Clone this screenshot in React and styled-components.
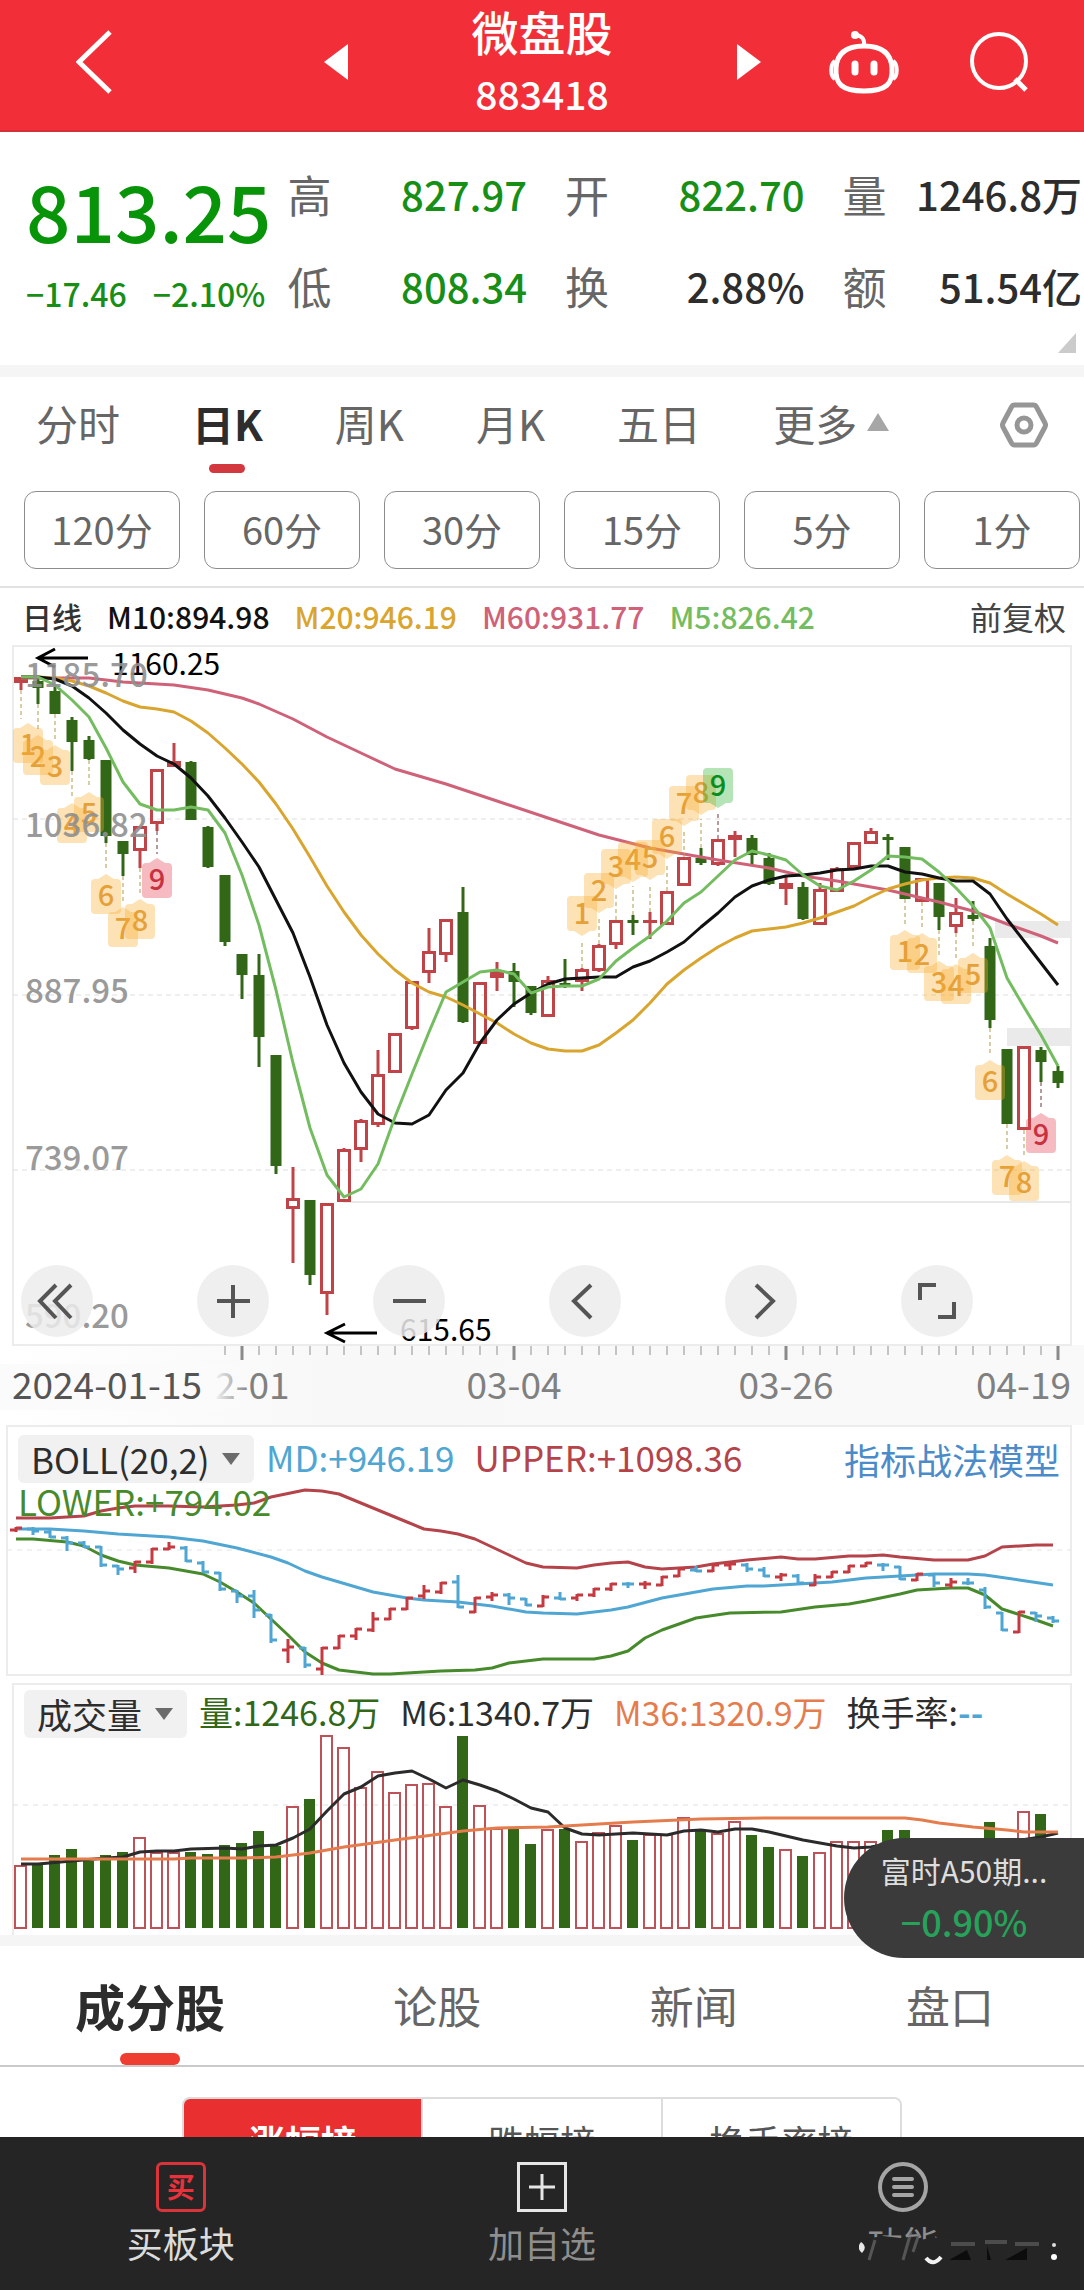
import { useState } from "react";
import styled, { createGlobalStyle } from "styled-components";

const FONT = `"Noto Sans CJK SC", "Noto Sans", sans-serif`;

const COLORS = {
  up: "#bf4347",
  down: "#316716",
  m5: "#73bd60",
  m10: "#111111",
  m20: "#d9a52e",
  m60: "#cf6178",
  boll: "#4fa6d3",
  bollUp: "#b5434a",
  bollLow: "#478a2c",
  volLong: "#e57c4d",
};

/* [up, body top, body bottom, high, low, volume top] */
const CANDLES = [
  [1, 677, 683, 677, 690, 1865],
  [0, 681, 688, 677, 704, 1863],
  [0, 691, 714, 687, 714, 1855],
  [0, 720, 742, 717, 771, 1849],
  [0, 740, 759, 736, 760, 1861],
  [0, 760, 836, 760, 843, 1855],
  [0, 841, 854, 841, 876, 1852],
  [1, 826, 851, 826, 868, 1837],
  [1, 769, 824, 769, 831, 1852],
  [1, 761, 767, 743, 767, 1852],
  [0, 762, 820, 761, 820, 1852],
  [0, 827, 867, 826, 868, 1854],
  [0, 875, 942, 875, 946, 1845],
  [0, 954, 975, 954, 999, 1843],
  [0, 975, 1037, 954, 1067, 1831],
  [0, 1055, 1166, 1055, 1174, 1846],
  [1, 1198, 1209, 1167, 1263, 1806],
  [0, 1200, 1275, 1200, 1285, 1799],
  [1, 1203, 1294, 1203, 1315, 1735],
  [1, 1149, 1202, 1148, 1202, 1747],
  [1, 1120, 1150, 1119, 1162, 1787],
  [1, 1074, 1125, 1050, 1127, 1771],
  [1, 1033, 1073, 1033, 1073, 1792],
  [1, 981, 1029, 981, 1030, 1784],
  [1, 951, 973, 928, 983, 1783],
  [1, 919, 955, 919, 962, 1806],
  [0, 912, 1022, 887, 1023, 1736],
  [1, 982, 1044, 982, 1044, 1805],
  [1, 971, 978, 962, 991, 1828],
  [0, 971, 982, 963, 1007, 1829],
  [0, 986, 1013, 986, 1015, 1844],
  [1, 980, 1017, 976, 1017, 1829],
  [0, 983, 986, 959, 988, 1829],
  [1, 969, 982, 968, 991, 1841],
  [1, 945, 971, 944, 972, 1832],
  [1, 920, 945, 920, 949, 1825],
  [0, 920, 923, 915, 935, 1840],
  [1, 920, 923, 912, 939, 1834],
  [1, 891, 925, 891, 925, 1834],
  [1, 857, 886, 857, 886, 1817],
  [0, 858, 863, 848, 865, 1830],
  [1, 839, 865, 839, 866, 1833],
  [1, 835, 840, 831, 857, 1821],
  [0, 838, 855, 835, 865, 1835],
  [0, 858, 884, 853, 885, 1847],
  [1, 883, 889, 877, 905, 1849],
  [0, 887, 919, 882, 920, 1856],
  [1, 889, 925, 883, 925, 1852],
  [1, 868, 892, 867, 892, 1841],
  [1, 842, 868, 842, 868, 1841],
  [1, 831, 844, 828, 844, 1841],
  [0, 837, 840, 834, 860, 1830],
  [0, 847, 899, 847, 899, 1830],
  [1, 878, 902, 878, 902, 1850],
  [0, 883, 917, 883, 930, 1850],
  [1, 912, 927, 898, 933, 1850],
  [0, 915, 919, 901, 921, 1850],
  [0, 946, 1020, 938, 1028, 1822],
  [0, 1049, 1124, 1049, 1124, 1845],
  [1, 1046, 1130, 1046, 1130, 1811],
  [0, 1050, 1062, 1047, 1082, 1814],
  [0, 1071, 1083, 1066, 1088, 1842],
];

/* one value for each candle */
const M5 = [
  677, 677, 685, 700, 717, 748, 782, 804, 810, 810, 807, 810, 833, 875, 925,
  990, 1063, 1128, 1175, 1197, 1189, 1164, 1117, 1074, 1032, 992, 982, 972,
  970, 974, 993, 987, 986, 986, 979, 961, 948, 936, 921, 903, 892, 876, 860,
  851, 855, 860, 875, 886, 890, 881, 870, 856, 857, 859, 872, 888, 906, 928,
  978, 1007, 1035, 1066,
];
const M10 = [
  677, 677, 679, 686, 698, 713, 730, 744, 756, 764, 778, 796, 818, 842, 867,
  900, 933, 977, 1025, 1063, 1092, 1114, 1123, 1124, 1115, 1090, 1073, 1043,
  1020, 1004, 993, 984, 979, 978, 977, 977, 967, 961, 952, 942, 927, 913, 897,
  886, 880, 876, 875, 873, 870, 869, 866, 866, 872, 874, 878, 881, 881, 894,
  919, 941, 963, 985,
];
const M20 = [
  677, 677, 678, 681, 686, 693, 701, 707, 709, 712, 721, 733, 748, 764, 782,
  804, 829, 857, 886, 912, 935, 954, 970, 983, 992, 997, 1005, 1014, 1023,
  1034, 1043, 1049, 1051, 1051, 1045, 1033, 1020, 1003, 984, 970, 958, 947,
  938, 931, 929, 927, 923, 918, 912, 906, 897, 889, 884, 880, 878, 877, 878,
  883, 894, 904, 914, 925,
];

/* [index, y] pairs */
const M60 = [
  [0, 678], [4, 678], [6, 682], [7, 683], [9, 685], [11, 690], [13, 698],
  [14, 704], [16, 719], [18, 737], [20, 753], [22, 769], [25, 784], [28, 801],
  [31, 818], [34, 835], [37, 848], [41, 860], [44, 868], [46, 876], [48, 881],
  [51, 890], [54, 902], [56, 911], [58, 924], [60, 936], [61, 943],
];
const BOLL_UPPER = [
  [0, 1518], [2, 1518], [4, 1516], [5, 1511], [6, 1508], [7, 1506], [9, 1506],
  [11, 1507], [13, 1505], [14, 1503], [15, 1497], [17, 1490], [18, 1491],
  [19, 1494], [20, 1501], [21, 1508], [22, 1515], [23, 1522], [24, 1529],
  [25, 1531], [26, 1534], [27, 1539], [28, 1547], [29, 1555], [30, 1563],
  [31, 1567], [33, 1568], [34, 1565], [35, 1563], [36, 1562], [37, 1567],
  [38, 1569], [40, 1567], [41, 1564], [42, 1562], [43, 1560], [45, 1557],
  [46, 1559], [47, 1559], [49, 1556], [50, 1556], [51, 1555], [52, 1557],
  [54, 1560], [56, 1560], [57, 1556], [58, 1547], [60, 1545], [61, 1545],
];
const BOLL_MID = [
  [0, 1529], [2, 1529], [4, 1531], [6, 1534], [9, 1537], [11, 1541],
  [13, 1548], [15, 1557], [16, 1563], [17, 1571], [18, 1577], [20, 1587],
  [21, 1592], [23, 1598], [24, 1600], [26, 1602], [28, 1606], [30, 1612],
  [31, 1613], [33, 1614], [35, 1610], [36, 1607], [38, 1598], [41, 1589],
  [43, 1586], [44, 1586], [46, 1584], [48, 1582], [50, 1578], [52, 1576],
  [54, 1574], [56, 1574], [57, 1575], [59, 1580], [61, 1585],
];
const BOLL_LOWER = [
  [0, 1539], [1, 1539], [3, 1542], [4, 1546], [5, 1555], [6, 1561], [7, 1565],
  [9, 1568], [11, 1574], [12, 1582], [13, 1592], [14, 1603], [15, 1619],
  [16, 1635], [17, 1652], [18, 1663], [19, 1670], [21, 1674], [22, 1674],
  [25, 1671], [27, 1670], [28, 1668], [29, 1663], [31, 1659], [34, 1659],
  [35, 1656], [36, 1651], [37, 1638], [38, 1630], [40, 1618], [42, 1613],
  [45, 1612], [47, 1607], [49, 1604], [50, 1601], [52, 1594], [53, 1590],
  [55, 1588], [56, 1588], [57, 1595], [58, 1609], [60, 1620], [61, 1626],
];
const VOL_SHORT = [
  [0, 1864], [1, 1864], [3, 1861], [5, 1858], [6, 1857], [7, 1852], [8, 1851],
  [9, 1851], [10, 1849], [12, 1848], [13, 1849], [14, 1846], [15, 1845],
  [16, 1838], [17, 1829], [18, 1811], [19, 1794], [20, 1787], [21, 1776],
  [22, 1773], [23, 1771], [24, 1779], [25, 1788], [26, 1780], [27, 1785],
  [28, 1791], [29, 1799], [30, 1808], [31, 1812], [32, 1828], [33, 1834],
  [34, 1835], [36, 1833], [38, 1835], [39, 1831], [40, 1830], [41, 1832],
  [42, 1829], [43, 1829], [44, 1832], [46, 1840], [48, 1846], [49, 1848],
  [50, 1847], [52, 1841], [58, 1842], [60, 1837], [61, 1833],
];
const VOL_LONG = [
  [0, 1859], [9, 1859], [10, 1858], [13, 1858], [15, 1857], [17, 1853],
  [19, 1847], [22, 1840], [26, 1831], [28, 1828], [31, 1827], [36, 1822],
  [40, 1819], [44, 1818], [52, 1818], [53, 1820], [54, 1823], [56, 1827],
  [58, 1830], [59, 1832], [61, 1832],
];

/* [index, tip y, label, above the candle] */
const SIGNALS = [
  [0, 723, 1], [1, 735, 2], [2, 745, 3], [3, 803, 4], [4, 792, 5],
  [5, 874, 6], [6, 907, 7], [7, 899, 8], [8, 858, 9],
  [33, 936, 1, true], [34, 913, 2, true], [35, 889, 3, true],
  [36, 882, 4, true], [37, 880, 5, true], [38, 859, 6, true],
  [39, 826, 7, true], [40, 815, 8, true], [41, 808, 9, true],
  [52, 930, 1], [53, 933, 2], [54, 961, 3], [55, 964, 4], [56, 953, 5],
  [57, 1060, 6], [58, 1155, 7], [59, 1161, 8], [60, 1113, 9],
];

const QUOTES = [
  ["高", "827.97", true],
  ["开", "822.70", true],
  ["量", "1246.8万", false],
  ["低", "808.34", true],
  ["换", "2.88%", false],
  ["额", "51.54亿", false],
];

const PERIODS = ["分时", "日K", "周K", "月K", "五日"];
const MINUTES = ["120分", "60分", "30分", "15分", "5分", "1分"];
const SECTIONS = ["成分股", "论股", "新闻", "盘口"];
const RANKS = ["涨幅榜", "跌幅榜", "换手率榜"];
const MAJOR_TICKS = [13, 29, 45, 61];

const xAt = (i, left = 21) => left + i * 17;
const pairs = (values) => values.map((y, i) => [i, y]);
const toPoints = (list, left) =>
  list.map(([i, y]) => `${xAt(i, left)},${y}`).join(" ");

const App = () => {
  const [period, setPeriod] = useState("日K");
  const [section, setSection] = useState("成分股");
  const [rank, setRank] = useState("涨幅榜");

  return (
    <PageStyled>
      <GlobalStyle />
      <HeaderStyled>
        <BackButtonStyled aria-label="返回">
          <BackIcon />
        </BackButtonStyled>
        <StockSwitchStyled>
          <IconButtonStyled aria-label="上一个">
            <svg width="24" height="36" viewBox="0 0 24 36">
              <path d="M24 0V36L0 18Z" fill="#fff" />
            </svg>
          </IconButtonStyled>
          <StockTitleStyled>
            <h1>微盘股</h1>
            <p>883418</p>
          </StockTitleStyled>
          <IconButtonStyled aria-label="下一个">
            <svg width="24" height="36" viewBox="0 0 24 36">
              <path d="M0 0V36L24 18Z" fill="#fff" />
            </svg>
          </IconButtonStyled>
        </StockSwitchStyled>
        <HeaderActionsStyled>
          <IconButtonStyled aria-label="助手">
            <RobotIcon />
          </IconButtonStyled>
          <IconButtonStyled aria-label="搜索">
            <SearchIcon />
          </IconButtonStyled>
        </HeaderActionsStyled>
      </HeaderStyled>

      <ContentStyled>
        <QuoteStyled>
          <div>
            <PriceStyled>813.25</PriceStyled>
            <ChangeStyled>
              <span>−17.46</span>
              <span>−2.10%</span>
            </ChangeStyled>
          </div>
          <QuoteGridStyled>
            {QUOTES.map(([label, value, green]) => (
              <QuoteItemStyled key={label} $green={green}>
                <dt>{label}</dt>
                <dd>{value}</dd>
              </QuoteItemStyled>
            ))}
          </QuoteGridStyled>
          <CornerStyled width="18" height="20" viewBox="0 0 18 20">
            <path d="M18 0V20H0Z" fill="#cbcbcb" />
          </CornerStyled>
        </QuoteStyled>

        <PeriodBarStyled>
          {PERIODS.map((name) => (
            <PeriodTabStyled
              key={name}
              $active={period === name}
              onClick={() => setPeriod(name)}
            >
              {name}
            </PeriodTabStyled>
          ))}
          <PeriodTabStyled>
            更多
            <svg width="22" height="18" viewBox="0 0 22 18">
              <path d="M11 0L22 18H0Z" fill="#a6a6a6" />
            </svg>
          </PeriodTabStyled>
          <SettingButtonStyled aria-label="设置">
            <svg width="48" height="46" viewBox="0 0 48 46" fill="none">
              <path
                d="M14.500 3H33.500Q35.500 3 36.500 5L45 21Q46 23 45 25L36.500 41Q35.500 43 33.500 43H14.500Q12.500 43 11.500 41L3 25Q2 23 3 21L11.500 5Q12.500 3 14.500 3Z"
                stroke="#969696"
                strokeWidth="5"
              />
              <circle cx="24" cy="23" r="7" stroke="#969696" strokeWidth="5" />
            </svg>
          </SettingButtonStyled>
        </PeriodBarStyled>

        <MinuteBarStyled>
          {MINUTES.map((name) => (
            <MinuteButtonStyled key={name}>{name}</MinuteButtonStyled>
          ))}
        </MinuteBarStyled>

        <AverageBarStyled>
          <LegendTextStyled $color="#333">日线</LegendTextStyled>
          <LegendTextStyled $color={COLORS.m10}>M10:894.98</LegendTextStyled>
          <LegendTextStyled $color={COLORS.m20}>M20:946.19</LegendTextStyled>
          <LegendTextStyled $color={COLORS.m60}>M60:931.77</LegendTextStyled>
          <LegendTextStyled $color={COLORS.m5}>M5:826.42</LegendTextStyled>
          <AdjustButtonStyled>前复权</AdjustButtonStyled>
        </AverageBarStyled>

        <ChartStyled>
          <CandleChart />
          <ChartToolsStyled>
            <ToolButton label="最早" d="M35 20L19 36L35 53M50 20L34 36L50 53" />
            <ToolButton label="放大" d="M20 36H53M36 20V53" />
            <ToolButton label="缩小" d="M20 36H53" />
            <ToolButton label="前移" d="M42 20L25 36L42 53" />
            <ToolButton label="后移" d="M31 20L48 36L31 53" />
            <ToolButton label="全屏" d="M19 35V20H35M53 37V52H37" />
          </ChartToolsStyled>
        </ChartStyled>

        <ChartStyled>
          <BollChart />
          <LegendStyled $left={18} $top={10}>
            <IndicatorPicker label="指标" value="BOLL(20,2)" />
            <BollTextStyled $color={COLORS.boll}>MD:+946.19</BollTextStyled>
            <BollTextStyled $color={COLORS.bollUp}>
              UPPER:+1098.36
            </BollTextStyled>
            <ModelLinkStyled href="#model">指标战法模型</ModelLinkStyled>
            <LowerTextStyled $color={COLORS.bollLow}>
              LOWER:+794.02
            </LowerTextStyled>
          </LegendStyled>
        </ChartStyled>

        <ChartStyled>
          <VolumeChart />
          <LegendStyled $left={24} $top={7}>
            <IndicatorPicker label="副图指标" value="成交量" />
            <IndicatorTextStyled $color={COLORS.down}>
              量:1246.8万
            </IndicatorTextStyled>
            <IndicatorTextStyled $color="#2d2d2d">
              M6:1340.7万
            </IndicatorTextStyled>
            <IndicatorTextStyled $color={COLORS.volLong}>
              M36:1320.9万
            </IndicatorTextStyled>
            <IndicatorTextStyled $color="#2d2d2d">
              换手率:<em>--</em>
            </IndicatorTextStyled>
          </LegendStyled>
        </ChartStyled>

        <SectionBarStyled>
          {SECTIONS.map((name) => (
            <SectionTabStyled
              key={name}
              $active={section === name}
              onClick={() => setSection(name)}
            >
              {name}
            </SectionTabStyled>
          ))}
        </SectionBarStyled>

        <RankBarStyled>
          {RANKS.map((name) => (
            <RankTabStyled
              key={name}
              $active={rank === name}
              onClick={() => setRank(name)}
            >
              {name}
            </RankTabStyled>
          ))}
        </RankBarStyled>
      </ContentStyled>

      <FloatStyled href="#a50">
        <span>富时A50期...</span>
        <strong>−0.90%</strong>
      </FloatStyled>

      <BottomBarStyled>
        <BottomButtonStyled $color="#dcdcdc">
          <BuyMarkStyled>买</BuyMarkStyled>
          买板块
        </BottomButtonStyled>
        <BottomButtonStyled $color="#8e8e8e">
          <svg width="50" height="50" viewBox="0 0 50 50" fill="none">
            <rect x="1.500" y="1.500" width="47" height="47" stroke="#e6e6e6" strokeWidth="3" />
            <path d="M25 12V38M12 25H38" stroke="#e6e6e6" strokeWidth="3" />
          </svg>
          加自选
        </BottomButtonStyled>
        <BottomButtonStyled $color="#8e8e8e">
          <svg width="50" height="50" viewBox="0 0 50 50" fill="none">
            <circle cx="25" cy="25" r="23" stroke="#a5a5a5" strokeWidth="4" />
            <path
              d="M16 17H34M16 25H34M16 33H34"
              stroke="#a5a5a5"
              strokeWidth="4"
              strokeLinecap="round"
            />
          </svg>
          功能
          <Smudge />
        </BottomButtonStyled>
      </BottomBarStyled>
    </PageStyled>
  );
};
export default App;

const BackIcon = () => (
  <svg width="36" height="64" viewBox="0 0 36 64" fill="none">
    <path d="M34 2L3 32L34 62" stroke="#fff" strokeWidth="5" />
  </svg>
);

const RobotIcon = () => (
  <svg width="70" height="64" viewBox="0 0 70 64" fill="none">
    <path
      d="M35 16C51 16 62 22 63 38C64 54 57 61 35 61C13 61 6 54 7 38C8 22 19 16 35 16Z"
      stroke="#fff"
      strokeWidth="5"
    />
    <path d="M6 31C1 34 1 46 6 49M64 31C69 34 69 46 64 49" stroke="#fff" strokeWidth="4" />
    <path d="M35 16C36 9 33 6 27 5" stroke="#fff" strokeWidth="4" />
    <circle cx="26" cy="5" r="4" fill="#fff" />
    <path d="M26 34V42M45 34V42" stroke="#fff" strokeWidth="7" strokeLinecap="round" />
  </svg>
);

const SearchIcon = () => (
  <svg width="60" height="60" viewBox="0 0 60 60" fill="none">
    <circle cx="30" cy="29" r="27" stroke="#fff" strokeWidth="4" />
    <path d="M46 47L57 58" stroke="#fff" strokeWidth="5" />
  </svg>
);

const Smudge = () => (
  <SmudgeStyled width="200" height="44" viewBox="0 0 200 44" fill="none">
    <path d="M0 14L24 10L60 14L100 8L200 6V44H0Z" fill="#252525" />
    <path d="M2 16Q9 21 3 27Q-3 22 2 16Z" fill="#e8e8e8" />
    <path d="M16 14L10 34M52 6L44 34M60 8L54 26" stroke="#777" strokeWidth="3" opacity="0.6" />
    <path d="M67 32Q74 41 82 31" stroke="#f2f2f2" strokeWidth="4" />
    <path d="M90 34L108 24L112 34ZM128 34V20L132 34ZM146 34L168 22V34Z" fill="#0c0c0c" />
    <path d="M92 18H116M126 16H148M156 18H180" stroke="#4c4c4c" strokeWidth="4" />
    <circle cx="195" cy="19" r="2" fill="#ddd" />
    <circle cx="195" cy="31" r="3" fill="#fff" />
  </SmudgeStyled>
);

const ToolButton = ({ label, d }) => (
  <ToolButtonStyled aria-label={label}>
    <svg width="72" height="72" viewBox="0 0 72 72" fill="none">
      <path d={d} stroke="#555" strokeWidth="4" />
    </svg>
  </ToolButtonStyled>
);

const IndicatorPicker = ({ label, value }) => (
  <PickerStyled>
    <select aria-label={label} defaultValue={value}>
      <option>{value}</option>
    </select>
    <svg width="18" height="12" viewBox="0 0 18 12">
      <path d="M0 0H18L9 12Z" fill="#6b6b6b" />
    </svg>
  </PickerStyled>
);

const Signal = ({ index, tip, label, above }) => {
  const x = xAt(index);
  // the first badge must stay inside the frame
  const badgeX = Math.max(x, 28);
  const [, , , high, low] = CANDLES[index];
  const last = label === 9;
  const fill = !last ? "#f8ab2f" : above ? "#2cb331" : "#e23b4c";
  const color = !last ? "#e5a038" : above ? "#0a8d1c" : "#c8313f";
  return (
    <g>
      <path
        d={`M${x} ${above ? high : low}V${above ? tip + 4 : tip - 4}`}
        stroke={last ? "#6b3b3b" : "#b39b4e"}
        strokeDasharray="4 3"
      />
      <path
        transform={`translate(${badgeX} ${tip}) scale(1 ${above ? -1 : 1})`}
        d="M0 0L8 5H11Q15 5 15 9V36Q15 40 11 40H-11Q-15 40 -15 36V9Q-15 5 -11 5H-8Z"
        fill={fill}
        opacity="0.35"
      />
      <ChartTextStyled
        x={badgeX}
        y={above ? tip - 12 : tip + 32}
        $size={29}
        $weight={500}
        $color={color}
        textAnchor="middle"
      >
        {label}
      </ChartTextStyled>
    </g>
  );
};

const Candle = ({ index, data }) => {
  const [up, top, bottom, high, low] = data;
  const x = xAt(index);
  const color = up ? COLORS.up : COLORS.down;
  const hollow = up && bottom - top > 8;
  return (
    <g stroke={color} strokeWidth="3">
      {high < top && <path d={`M${x} ${high}V${top}`} />}
      {low > bottom && <path d={`M${x} ${bottom}V${low}`} />}
      {hollow ? (
        <rect x={x - 5.5} y={top + 1.5} width="11" height={bottom - top - 3} fill="none" />
      ) : (
        <rect
          x={x - (up ? 7 : 5.5)}
          y={top}
          width={up ? 14 : 11}
          height={bottom - top}
          fill={color}
          stroke="none"
        />
      )}
    </g>
  );
};

const PRICE_LABELS = [
  [687, "1185.70"],
  [837, "1036.82"],
  [1003, "887.95"],
  [1170, "739.07"],
  [1328, "590.20"],
];
const DATE_LABELS = [
  [242, "02-01", "middle"],
  [514, "03-04", "middle"],
  [786, "03-26", "middle"],
  [1071, "04-19", "end"],
];

const CandleChart = () => (
  <SvgStyled viewBox="0 645 1084 780">
    <defs>
      <linearGradient id="axis">
        <stop offset="0" stopColor="#fff" />
        <stop offset="0.3" stopColor="#f8f8f8" />
        <stop offset="1" stopColor="#f9f9f9" />
      </linearGradient>
      <linearGradient id="fade">
        <stop offset="0.85" stopColor="#fbfbfb" />
        <stop offset="1" stopColor="#fbfbfb" stopOpacity="0" />
      </linearGradient>
    </defs>
    <rect x="0" y="1345" width="1084" height="80" fill="url(#axis)" />
    <rect x="13" y="646" width="1058" height="699" fill="#fff" stroke="#ececec" strokeWidth="2" />
    <path
      d="M13 819H1071M13 995H1071M13 1170H1071"
      stroke="#dedede"
      strokeDasharray="5 4"
    />
    <path d="M343 1202H1071" stroke="#e8e8e8" strokeWidth="2" />
    <path d="M995 921H1071V938H995ZM1007 1028H1071V1046H1007Z" fill="#eaeaea" />

    {CANDLES.map((data, i) => (
      <Candle key={i} index={i} data={data} />
    ))}
    <g fill="none" strokeWidth="3" strokeLinejoin="round">
      <polyline points={toPoints(M60)} stroke={COLORS.m60} />
      <polyline points={toPoints(pairs(M20))} stroke={COLORS.m20} />
      <polyline points={toPoints(pairs(M10))} stroke={COLORS.m10} />
      <polyline points={toPoints(pairs(M5))} stroke={COLORS.m5} />
    </g>
    {SIGNALS.map(([index, tip, label, above]) => (
      <Signal key={index} index={index} tip={tip} label={label} above={above} />
    ))}

    <path
      d="M88 658H39M55 649L38 658L55 667M377 1333H328M345 1324L327 1333L345 1342"
      fill="none"
      stroke="#000"
      strokeWidth="3"
    />
    <ChartTextStyled x="112" y="675" $size={30} $color="#000">
      1160.25
    </ChartTextStyled>
    <ChartTextStyled x="400" y="1341" $size={30} $color="#000">
      615.65
    </ChartTextStyled>
    <g opacity="0.9">
      {PRICE_LABELS.map(([y, text]) => (
        <ChartTextStyled key={y} x="25" y={y} $size={33} $weight={500} $color="#909090">
          {text}
        </ChartTextStyled>
      ))}
    </g>

    {CANDLES.map((_, i) => {
      if (i < 12) return null;
      const major = MAJOR_TICKS.includes(i);
      return (
        <path
          key={i}
          d={`M${xAt(i)} 1346V${major ? 1360 : 1355}`}
          stroke={major ? "#8a8a8a" : "#c4c4c4"}
          strokeWidth={major ? 3 : 2}
        />
      );
    })}
    {DATE_LABELS.map(([x, text, anchor]) => (
      <ChartTextStyled key={x} x={x} y="1399" $size={37} $color="#808080" textAnchor={anchor}>
        {text}
      </ChartTextStyled>
    ))}
    <rect x="0" y="1364" width="250" height="46" fill="url(#fade)" />
    <ChartTextStyled x="12" y="1399" $size={37} $color="#555">
      2024-01-15
    </ChartTextStyled>
  </SvgStyled>
);

const BollChart = () => {
  const scale = (y) => Math.round(1529 + (y - 680) * 0.228);
  return (
    <SvgStyled viewBox="0 1425 1084 258">
      <rect x="7" y="1426" width="1064" height="249" fill="#fff" stroke="#ececec" strokeWidth="2" />
      <path d="M7 1550H1071" stroke="#e4e4e4" strokeDasharray="5 5" />
      <g fill="none" strokeWidth="3" strokeLinejoin="round">
        <polyline points={toPoints(BOLL_UPPER, 16)} stroke={COLORS.bollUp} />
        <polyline points={toPoints(BOLL_MID, 16)} stroke={COLORS.boll} />
        <polyline points={toPoints(BOLL_LOWER, 16)} stroke={COLORS.bollLow} />
        {CANDLES.map(([up, top, bottom, high, low], i) => {
          const x = xAt(i, 16);
          const open = scale(up ? bottom : top);
          const close = scale(up ? top : bottom);
          return (
            <path
              key={i}
              d={`M${x - 6} ${open}H${x}M${x} ${scale(high) - 1}V${scale(low) + 1}M${x} ${close}H${x + 6}`}
              stroke={up ? "#c53a40" : COLORS.boll}
            />
          );
        })}
      </g>
    </SvgStyled>
  );
};

const VolumeChart = () => (
  <SvgStyled viewBox="0 1683 1084 252">
    <path d="M13 1935V1684H1071V1935" fill="#fff" stroke="#ececec" strokeWidth="2" />
    <path d="M13 1805H1071" stroke="#dfdfdf" strokeDasharray="5 5" />
    {CANDLES.map(([up, , , , , top], i) =>
      up ? (
        <rect
          key={i}
          x={xAt(i) - 6}
          y={top + 1}
          width="11"
          height={1927 - top}
          fill="none"
          stroke="#bd5359"
          strokeWidth="2"
        />
      ) : (
        <rect key={i} x={xAt(i) - 6} y={top} width="11" height={1928 - top} fill={COLORS.down} />
      )
    )}
    <g fill="none" strokeWidth="3" strokeLinejoin="round">
      <polyline points={toPoints(VOL_SHORT)} stroke="#2b2b2b" />
      <polyline points={toPoints(VOL_LONG)} stroke={COLORS.volLong} />
    </g>
  </SvgStyled>
);

const GlobalStyle = createGlobalStyle`
  * {
    box-sizing: border-box;
    margin: 0;
    padding: 0;
  }

  body {
    background: #fff;
    color: #2d2d2d;
    font-family: ${FONT};
  }

  button, select {
    border: none;
    background: none;
    color: inherit;
    font: inherit;
    cursor: pointer;
  }

  a {
    text-decoration: none;
  }

  svg {
    display: block;
  }
`;

const PageStyled = styled.div`
  position: relative;
  display: flex;
  flex-direction: column;
  height: 100vh;
`;

const HeaderStyled = styled.header`
  display: grid;
  grid-template-columns: 1fr auto 1fr;
  align-items: center;
  flex: none;
  height: 132px;
  padding-bottom: 8px;
  background: #f22f39;
  border-bottom: 2px solid #d2303a;
`;

const IconButtonStyled = styled.button`
  display: flex;
  align-items: center;
`;

const BackButtonStyled = styled(IconButtonStyled)`
  justify-self: start;
  margin-left: 76px;
`;

const StockSwitchStyled = styled.div`
  display: flex;
  align-items: center;
  gap: 124px;
`;

const StockTitleStyled = styled.div`
  color: #fff;
  text-align: center;
  line-height: 62px;

  h1 {
    font-size: 47px;
    font-weight: 500;
  }

  p {
    font-size: 39px;
    font-weight: 500;
  }
`;

const HeaderActionsStyled = styled.div`
  display: flex;
  align-items: center;
  justify-content: flex-end;
  gap: 70px;
  padding-right: 55px;
`;

const ContentStyled = styled.main`
  flex: 1;
  min-height: 0;
  overflow-y: auto;
  scrollbar-width: none;
`;

const QuoteStyled = styled.section`
  position: relative;
  display: flex;
  gap: 16px;
  height: 245px;
  padding: 16px 2px 0 26px;
  border-bottom: 12px solid #f5f5f5;
`;

const PriceStyled = styled.div`
  color: #089408;
  font-size: 78px;
  font-weight: 500;
  line-height: 122px;
`;

const ChangeStyled = styled.div`
  display: flex;
  gap: 26px;
  color: #178f17;
  font-size: 32px;
  font-weight: 500;
  line-height: 46px;
`;

const QuoteGridStyled = styled.dl`
  flex: 1;
  display: grid;
  grid-template-columns: repeat(3, 1fr);
  column-gap: 38px;
  align-content: start;
`;

const QuoteItemStyled = styled.div`
  display: flex;
  align-items: center;
  justify-content: space-between;
  height: 92px;
  white-space: nowrap;

  dt {
    color: #666;
    font-size: 44px;
  }

  dd {
    color: ${(props) => (props.$green ? "#178f17" : "#2d2d2d")};
    font-size: 40px;
    font-weight: 500;
  }
`;

const CornerStyled = styled.svg`
  position: absolute;
  right: 8px;
  bottom: 12px;
`;

const PeriodBarStyled = styled.nav`
  display: flex;
  align-items: center;
  gap: 72px;
  height: 96px;
  padding: 0 36px;
`;

const PeriodTabStyled = styled.button`
  position: relative;
  display: flex;
  align-items: center;
  gap: 10px;
  height: 96px;
  padding-bottom: 6px;
  color: ${(props) => (props.$active ? "#2d2d2d" : "#666")};
  font-size: 42px;
  font-weight: ${(props) => (props.$active ? 700 : 400)};
  white-space: nowrap;

  &::after {
    content: "";
    display: ${(props) => (props.$active ? "block" : "none")};
    position: absolute;
    bottom: 0;
    left: 50%;
    width: 36px;
    height: 9px;
    margin-left: -18px;
    border-radius: 5px;
    background: #d4383f;
  }
`;

const SettingButtonStyled = styled.button`
  margin-left: auto;
`;

const MinuteBarStyled = styled.div`
  display: flex;
  gap: 24px;
  padding: 18px 4px 17px 24px;
  border-bottom: 2px solid #e2e2e2;
`;

const MinuteButtonStyled = styled.button`
  flex: 1;
  height: 78px;
  padding-bottom: 4px;
  border: 1px solid #8c8c8c;
  border-radius: 12px;
  color: #666;
  font-size: 38px;
  white-space: nowrap;
`;

const AverageBarStyled = styled.div`
  display: flex;
  align-items: center;
  gap: 25px;
  height: 57px;
  padding: 0 18px 2px 22px;
`;

const LegendTextStyled = styled.span`
  color: ${(props) => props.$color};
  font-size: 30px;
  font-weight: 500;
  white-space: nowrap;
`;

const AdjustButtonStyled = styled.button`
  margin-left: auto;
  color: #444;
  font-size: 32px;
`;

const ChartStyled = styled.section`
  position: relative;
`;

const SvgStyled = styled.svg`
  width: 100%;
  height: auto;
`;

const ChartTextStyled = styled.text`
  fill: ${(props) => props.$color};
  font-family: ${FONT};
  font-size: ${(props) => props.$size}px;
  font-weight: ${(props) => props.$weight || 400};
`;

const ChartToolsStyled = styled.div`
  position: absolute;
  left: 21px;
  bottom: 88px;
  display: flex;
  gap: 104px;
`;

const ToolButtonStyled = styled.button`
  border-radius: 50%;
  background: rgba(236, 236, 236, 0.85);
`;

const LegendStyled = styled.div`
  position: absolute;
  top: ${(props) => props.$top}px;
  left: ${(props) => props.$left}px;
  right: 24px;
  display: flex;
  flex-wrap: wrap;
  align-items: center;
  column-gap: 20px;
`;

const PickerStyled = styled.label`
  position: relative;
  display: flex;
  align-items: center;
  margin-right: -8px;
  border-radius: 6px;
  background: #f1f1f1;

  select {
    appearance: none;
    height: 48px;
    padding: 0 44px 0 13px;
    color: #2d2d2d;
    font-size: 35px;
    line-height: 48px;
  }

  svg {
    position: absolute;
    right: 14px;
    pointer-events: none;
  }
`;

const IndicatorTextStyled = styled.span`
  color: ${(props) => props.$color};
  font-size: 34px;
  line-height: 36px;
  padding-bottom: 4px;
  white-space: nowrap;

  em {
    color: ${COLORS.boll};
    font-style: normal;
    font-weight: 700;
  }
`;

const BollTextStyled = styled(IndicatorTextStyled)`
  font-size: 35px;
`;

const LowerTextStyled = styled(BollTextStyled)`
  flex-basis: 100%;
`;

const ModelLinkStyled = styled.a`
  margin-left: auto;
  color: #4b8bc9;
  font-size: 36px;
  line-height: 48px;
`;

const SectionBarStyled = styled.nav`
  display: flex;
  align-items: center;
  justify-content: space-between;
  height: 132px;
  padding: 0 90px 0 75px;
  border-top: 11px solid #f5f5f5;
  border-bottom: 2px solid #cacaca;
`;

const SectionTabStyled = styled.button`
  position: relative;
  height: 119px;
  padding-bottom: 2px;
  color: ${(props) => (props.$active ? "#2d2d2d" : "#666")};
  font-size: ${(props) => (props.$active ? 50 : 44)}px;
  font-weight: ${(props) => (props.$active ? 700 : 400)};

  &::after {
    content: "";
    display: ${(props) => (props.$active ? "block" : "none")};
    position: absolute;
    bottom: 0;
    left: 50%;
    width: 60px;
    height: 12px;
    margin-left: -30px;
    border-radius: 6px;
    background: #f03d31;
  }
`;

const RankBarStyled = styled.div`
  display: flex;
  margin: 30px 182px;
  border: 2px solid #dcdcdc;
  border-radius: 8px;
  overflow: hidden;
`;

const RankTabStyled = styled.button`
  flex: 1;
  height: 84px;
  background: ${(props) => (props.$active ? "#ea2f30" : "#fff")};
  color: ${(props) => (props.$active ? "#fff" : "#555")};
  font-size: 36px;
  font-weight: ${(props) => (props.$active ? 700 : 400)};

  & + & {
    border-left: 2px solid #dcdcdc;
  }
`;

const FloatStyled = styled.a`
  position: absolute;
  right: 0;
  bottom: 332px;
  display: flex;
  flex-direction: column;
  align-items: center;
  width: 240px;
  height: 120px;
  padding: 8px 0 0;
  border-radius: 60px 0 0 60px;
  background: #3b3b3b;

  span {
    color: #dedede;
    font-size: 30px;
    line-height: 48px;
  }

  strong {
    color: #27a25a;
    font-size: 36px;
    font-weight: 500;
    line-height: 54px;
  }
`;

const BottomBarStyled = styled.footer`
  display: flex;
  flex: none;
  height: 153px;
  background: #252525;
`;

const BottomButtonStyled = styled.button`
  position: relative;
  flex: 1;
  display: flex;
  flex-direction: column;
  align-items: center;
  gap: 12px;
  padding-top: 25px;
  color: ${(props) => props.$color};
  font-size: 36px;
  line-height: 36px;
`;

const BuyMarkStyled = styled.span`
  width: 50px;
  height: 50px;
  border: 3px solid #d8343a;
  border-radius: 6px;
  color: #e8323c;
  font-size: 28px;
  font-weight: 700;
  line-height: 42px;
`;

const SmudgeStyled = styled.svg`
  position: absolute;
  right: 25px;
  bottom: 20px;
`;
